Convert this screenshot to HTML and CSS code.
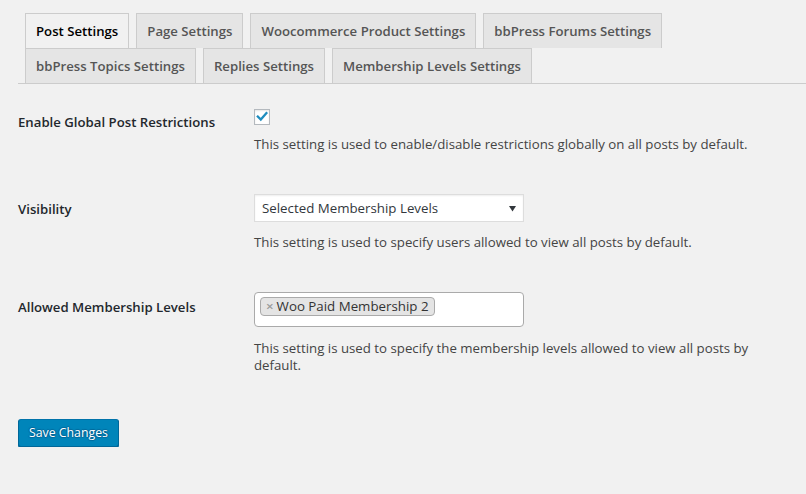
FILE: index.html
```html
<!DOCTYPE html>
<html lang="en">

<head>
    <meta charset="UTF-8">
    <meta name="viewport" content="width=device-width, initial-scale=1.0">
    <title>Post Settings</title>
    <link rel="stylesheet" href="styles.css">
</head>

<body>
    <div class="wrap">
        <nav class="nav-tabs">
            <a class="nav-tab nav-tab-active" href="#">Post Settings</a>
            <a class="nav-tab" href="#">Page Settings</a>
            <a class="nav-tab" href="#">Woocommerce Product Settings</a>
            <a class="nav-tab" href="#">bbPress Forums Settings</a>
            <a class="nav-tab" href="#">bbPress Topics Settings</a>
            <a class="nav-tab" href="#">Replies Settings</a>
            <a class="nav-tab" href="#">Membership Levels Settings</a>
        </nav>

        <form class="settings-form">
            <div class="field-row">
                <label class="field-label label-check">Enable Global Post Restrictions</label>
                <div class="field-control">
                    <span class="checkbox">
                        <svg width="16" height="16" viewBox="0 0 16 16">
                            <path d="M3.8 7.6 L6.8 10.6 L12.4 4.2" fill="none" stroke="#1e8cbe" stroke-width="2.3" stroke-linecap="square"/>
                        </svg>
                    </span>
                    <p class="description desc-check">This setting is used to enable/disable restrictions globally on all posts by default.</p>
                </div>
            </div>

            <div class="field-row row-gap">
                <label class="field-label">Visibility</label>
                <div class="field-control">
                    <div class="select">
                        <span>Selected Membership Levels</span>
                        <svg width="7" height="6" viewBox="0 0 7 6">
                            <path d="M0 0 H7 L3.5 5.5 Z" fill="#32373c"/>
                        </svg>
                    </div>
                    <p class="description">This setting is used to specify users allowed to view all posts by default.</p>
                </div>
            </div>

            <div class="field-row row-gap">
                <label class="field-label">Allowed Membership Levels</label>
                <div class="field-control">
                    <div class="multi-select">
                        <span class="choice"><span class="choice-remove">&times;</span>Woo Paid Membership 2</span>
                    </div>
                    <p class="description desc-multi">This setting is used to specify the membership levels allowed to view all posts by default.</p>
                </div>
            </div>

            <p class="submit">
                <button type="button" class="button-primary">Save Changes</button>
            </p>
        </form>
    </div>
</body>

</html>
```

FILE: styles.css
```css
body {
    margin: 0;
    background-color: #f1f1f1;
    color: #444;
    font-family: "Open Sans", "Noto Sans", sans-serif;
    font-size: 13.2px;
}

.wrap {
    padding-left: 18px;
}

/* Tabs */
.nav-tabs {
    display: flex;
    flex-wrap: wrap;
    padding-top: 13px;
    border-bottom: 1px solid #ccc;
}

.nav-tab {
    margin-left: 7px;
    padding: 5px 10px;
    border: 1px solid #ccc;
    border-bottom: none;
    background-color: #e5e5e5;
    color: #555;
    font-size: 13.2px;
    font-weight: 600;
    line-height: 24px;
    text-decoration: none;
    white-space: nowrap;
}

.nav-tab-active {
    background-color: #f1f1f1;
    color: #000;
}

/* Form rows */
.settings-form {
    padding-top: 25px;
}

.field-row {
    display: grid;
    grid-template-columns: 236px 520px;
    align-items: start;
}

.row-gap {
    margin-top: 41px;
}

.field-label {
    margin-top: 6px;
    color: #23282d;
    font-size: 13.2px;
    font-weight: 600;
    line-height: 18px;
}

.label-check {
    margin-top: 4px;
}

.description {
    margin: 12px 0 0;
    color: #444;
    font-size: 13.26px;
    line-height: 17px;
}

.desc-check {
    margin-top: 11px;
}

.desc-multi {
    margin-top: 13px;
}

/* Checkbox */
.checkbox {
    display: block;
    width: 16px;
    height: 16px;
    box-sizing: border-box;
    border: 1px solid #b4b9be;
    background-color: #fff;
    box-shadow: inset 0 1px 2px rgba(0, 0, 0, 0.1);
}

.checkbox svg {
    display: block;
    margin: -1px 0 0 -1px;
}

/* Select */
.select {
    display: flex;
    align-items: center;
    justify-content: space-between;
    width: 270px;
    height: 28px;
    box-sizing: border-box;
    padding: 0 7px 0 7px;
    border: 1px solid #ddd;
    background-color: #fff;
    box-shadow: inset 0 1px 2px rgba(0, 0, 0, 0.07);
    color: #32373c;
    font-size: 13.3px;
}

.select svg {
    margin-top: 1px;
}

/* Multi select */
.multi-select {
    width: 270px;
    height: 35px;
    box-sizing: border-box;
    padding: 4px 5px;
    border: 1px solid #aaa;
    border-radius: 4px;
    background-color: #fff;
}

.choice {
    display: inline-block;
    height: 19px;
    box-sizing: border-box;
    padding: 0 5px;
    border: 1px solid #aaa;
    border-radius: 4px;
    background-color: #e4e4e4;
    color: #333;
    font-size: 13.3px;
    line-height: 17px;
}

.choice-remove {
    margin-right: 3px;
    color: #999;
    font-weight: 600;
}

/* Button */
.submit {
    margin: 45px 0 0;
}

.button-primary {
    height: 28px;
    padding: 0 10px 1px;
    border: 1px solid;
    border-color: #0073aa #006799 #006799;
    border-radius: 3px;
    background-color: #0085ba;
    box-shadow: 0 1px 0 #006799;
    color: #fff;
    font-family: "Open Sans", "Noto Sans", sans-serif;
    font-size: 12.3px;
    line-height: 26px;
    text-shadow: 0 -1px 1px #006799, 1px 0 1px #006799, 0 1px 1px #006799, -1px 0 1px #006799;
    cursor: pointer;
}
```
